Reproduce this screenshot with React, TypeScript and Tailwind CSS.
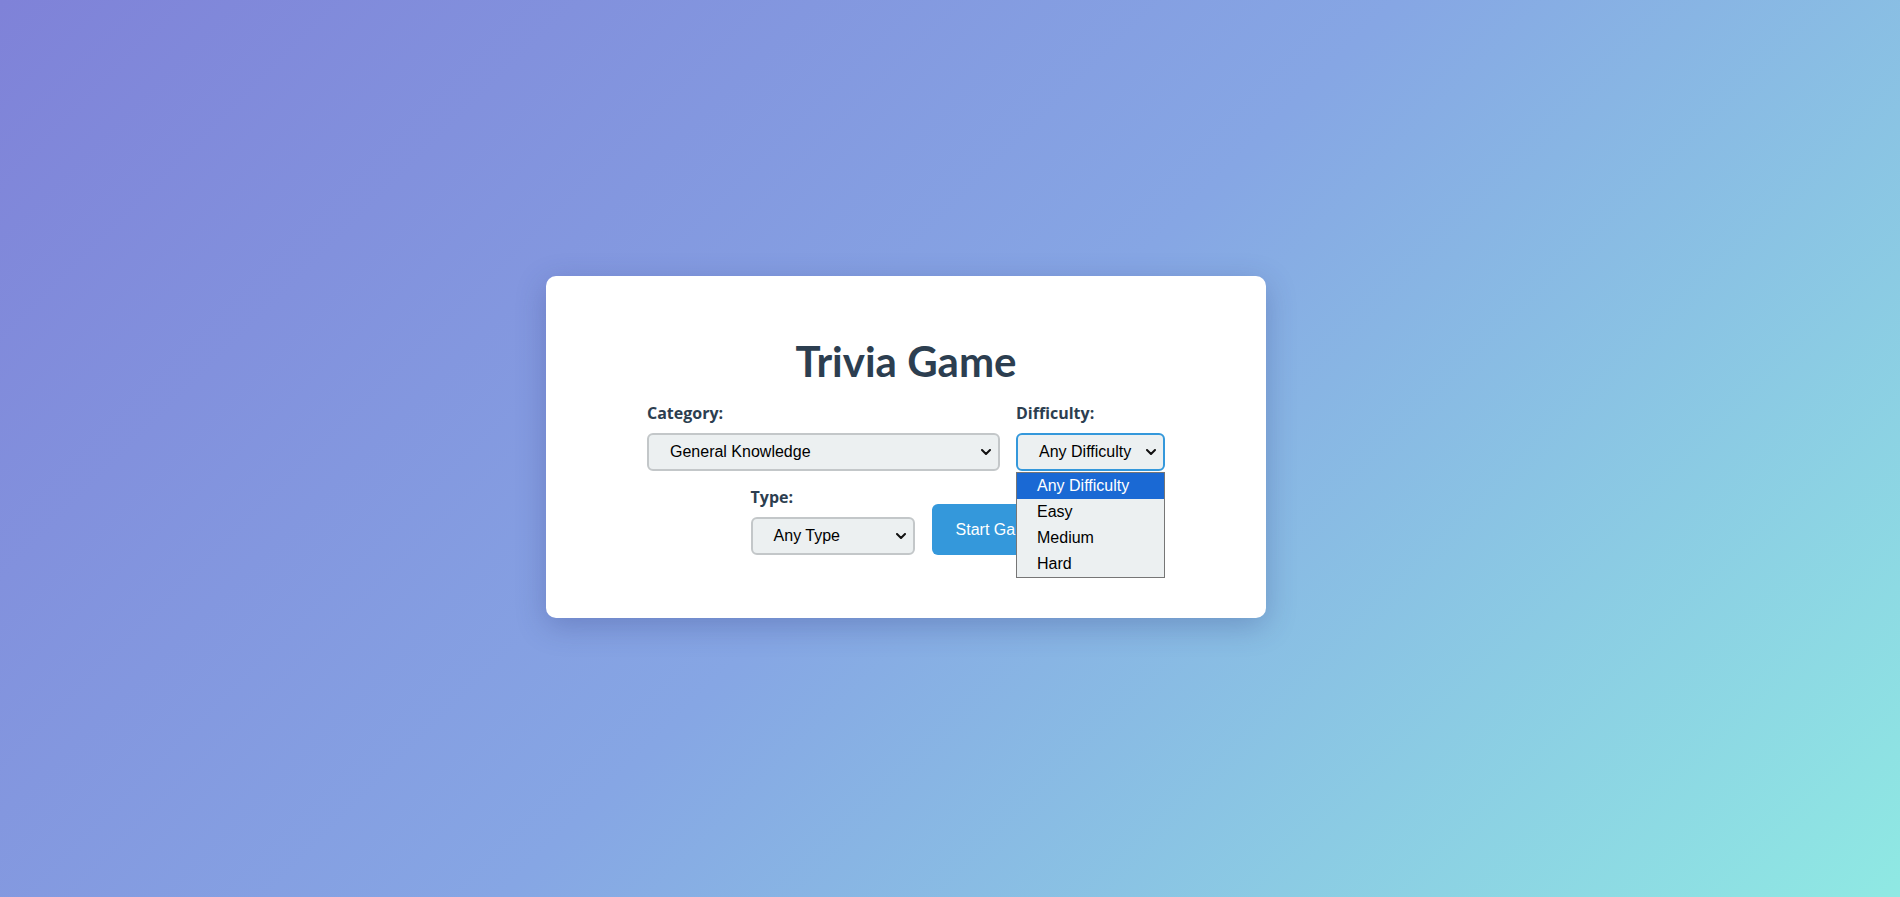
import React, { useState } from 'react'

const Chevron = () => (
  <svg width="10" height="6" viewBox="0 0 10 6" className="pointer-events-none absolute right-[9px] top-1/2 -translate-y-1/2">
    <path d="M1 1l4 4 4-4" fill="none" stroke="#111" strokeWidth="2" strokeLinecap="round" strokeLinejoin="round" />
  </svg>
)

const Field: React.FC<any> = ({ label, value, width, focused, children }) => (
  <div className="flex flex-col">
    <label className="mb-[10px] text-[16px] leading-[20px] font-bold text-[#2c3e50] font-['Open_Sans',sans-serif]">{label}</label>
    <div className="relative" style={{ width }}>
      <div
        className={
          'flex h-[38px] items-center rounded-[6px] border-2 bg-[#ecf0f1] pl-[21px] text-[16px] text-black font-["Liberation_Sans",Arial,sans-serif] ' +
          (focused ? 'border-[#3498db]' : 'border-[#c3c7c9]')
        }
      >
        {value}
      </div>
      <Chevron />
      {children}
    </div>
  </div>
)

const difficulties = ['Any Difficulty', 'Easy', 'Medium', 'Hard']

export default function App() {
  const [difficulty] = useState('Any Difficulty')
  return (
    <div className="flex h-[897px] w-full items-start justify-center bg-[linear-gradient(135deg,#7f82d8_0%,#86a6e4_50%,#8fe9e3_100%)] pt-[276px] pr-[88px]">
      <div className="w-[720px] rounded-[10px] bg-white pt-[60px] pb-[63px] shadow-[0_8px_30px_rgba(40,50,120,0.28)]">
        <h1 className="mb-[17px] text-center text-[42px] leading-[50px] font-bold text-[#2c3e50] font-['Lato',sans-serif]">
          Trivia Game
        </h1>
        <div className="flex flex-col items-center gap-[16px]">
          <div className="flex items-end justify-center gap-[16px]">
            <Field label="Category:" value="General Knowledge" width={353} />
            <Field label="Difficulty:" value={difficulty} width={149} focused>
              <div className="absolute left-0 top-full z-10 mt-[1px] w-full border border-[#767676] bg-[#ecf0f1] font-['Liberation_Sans',Arial,sans-serif] text-[16px]">
                {difficulties.map((d) => (
                  <div
                    key={d}
                    className={
                      'h-[26px] pl-[20px] leading-[26px] ' +
                      (d === difficulty ? 'bg-[#1a69d4] text-white' : 'text-black')
                    }
                  >
                    {d}
                  </div>
                ))}
              </div>
            </Field>
          </div>
          <div className="flex items-end justify-center gap-[17px]">
            <Field label="Type:" value="Any Type" width={164} />
            <button className="h-[51px] rounded-[6px] bg-[#3498db] px-[24px] text-[16px] text-white font-['Liberation_Sans',Arial,sans-serif]">
              Start Game
            </button>
          </div>
        </div>
      </div>
    </div>
  )
}
